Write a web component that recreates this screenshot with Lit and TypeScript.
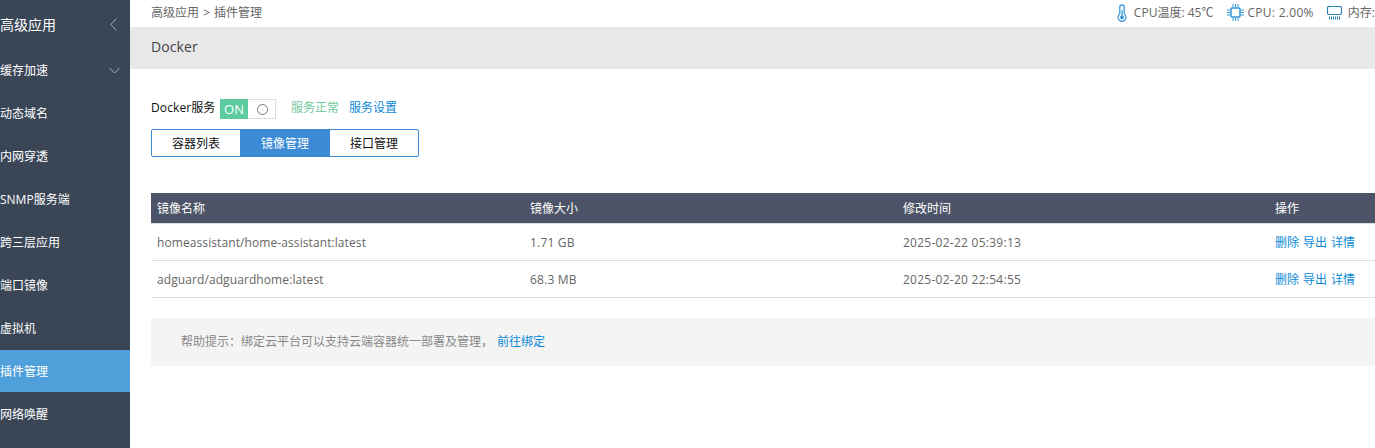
import { LitElement, html, css, svg } from "lit";
import { customElement } from "lit/decorators.js";

const menu = ["缓存加速", "动态域名", "内网穿透", "SNMP服务端", "跨三层应用", "端口镜像", "虚拟机", "插件管理", "网络唤醒"];
const rows = [
  ["homeassistant/home-assistant:latest", "1.71 GB", "2025-02-22 05:39:13"],
  ["adguard/adguardhome:latest", "68.3 MB", "2025-02-20 22:54:55"],
];

@customElement("app-root")
export class AppRoot extends LitElement {
  static styles = css`
    :host {
      display: flex;
      width: 1375px;
      height: 448px;
      overflow: hidden;
      background: #fff;
      font: 12px/18px "Open Sans", "Noto Sans CJK SC", sans-serif;
      color: #666;
    }
    a { color: #0a8ad6; text-decoration: none; }
    .side { width: 130px; flex: none; background: #3a4656; color: #fff; }
    .top-item {
      height: 49px;
      display: flex;
      align-items: center;
      justify-content: space-between;
      font-size: 14px;
      padding-right: 13px;
    }
    .item {
      height: 43px;
      display: flex;
      align-items: center;
      justify-content: space-between;
      padding-right: 10px;
      box-sizing: border-box;
    }
    .item.on { background: #4f9fdb; height: 42px; margin-bottom: 1px; padding-top: 1px; }
    .main { flex: 1; min-width: 0; display: flex; flex-direction: column; }
    .top {
      height: 27px;
      flex: none;
      display: flex;
      justify-content: space-between;
      align-items: center;
      padding: 0 0 2px 21px;
      box-sizing: border-box;
      white-space: nowrap;
    }
    .crumb-sep { margin: 0 1px; }
    .stats { display: flex; align-items: center; }
    .stat { display: flex; align-items: center; }
    .temp svg { margin-right: 6px; }
    .cpu { margin-left: 14px; }
    .cpu svg { margin-right: 3px; }
    .cpu span { letter-spacing: 0.3px; }
    .mem { margin-left: 13px; }
    .mem svg { margin-right: 6px; }
    .title {
      height: 42px;
      flex: none;
      background: #e8e8e8;
      display: flex;
      align-items: center;
      padding: 0 0 2px 21px;
      box-sizing: border-box;
      font-size: 14px;
      letter-spacing: 0.1px;
      color: #444;
    }
    .body { padding: 29px 0 0 21px; }
    .svc { display: flex; align-items: center; height: 22px; color: #111; }
    .svc > span, .svc > a { position: relative; top: -1px; }
    .svc-name { width: 69px; flex: none; white-space: nowrap; letter-spacing: 0.1px; }
    .toggle {
      display: flex;
      width: 56px;
      height: 20px;
      margin-right: 15px;
      box-sizing: border-box;
      border: 1px solid #ddd;
      background: #fff;
    }
    .toggle .lbl {
      width: 28px;
      margin: -1px 0 -1px -1px;
      background: #5ccb9f;
      color: #fff;
      font-size: 13px;
      line-height: 20px;
      text-align: center;
    }
    .toggle .knob { flex: 1; display: flex; align-items: center; justify-content: center; padding-left: 2px; }
    .toggle i {
      width: 9px; height: 9px; border: 1px solid #777; border-radius: 50%;
    }
    .ok { color: #6fc79c; margin-right: 10px; }
    .tabs {
      display: grid;
      grid-template-columns: 88px 90px 1fr;
      width: 268px;
      height: 28px;
      margin-top: 9px;
      box-sizing: border-box;
      border: 1px solid #3d8bd4;
      border-radius: 2px;
      color: #111;
    }
    .tab { display: flex; align-items: center; justify-content: center; padding-top: 2px; box-sizing: border-box; }
    .tab.on { background: #3d8bd4; color: #fff; }
    .table { margin-top: 36px; }
    .row {
      display: grid;
      grid-template-columns: 373px 373px 372px 1fr;
      height: 37px;
      box-sizing: border-box;
      align-items: center;
      padding: 2px 0 0 6px;
      border-bottom: 1px solid #ddd;
    }
    .row.head {
      height: 31px;
      background: #4d5468;
      color: #fff;
      background-clip: padding-box;
    }
    .name { letter-spacing: 0.09px; }
    .size { letter-spacing: 0.2px; }
    .time { letter-spacing: 0.26px; }
    .acts { display: flex; gap: 4px; }
    .tip {
      margin-top: 20px;
      height: 48px;
      background: #f4f4f4;
      display: flex;
      align-items: center;
      padding-left: 30px;
      box-sizing: border-box;
      color: #888;
    }
    .tip a { margin-left: 4px; }
    svg { display: block; flex: none; }
  `;

  private chevLeft = svg`<svg width="7" height="13" viewBox="0 0 7 13" fill="none" stroke="#a9b1bb" stroke-width="1"><path d="M6.500 .5 .8 6.500l5.700 6"/></svg>`;
  private chevDown = svg`<svg width="11" height="7" viewBox="0 0 11 7" fill="none" stroke="#a9b1bb" stroke-width="1"><path d="M.5 1l5 5 5-5"/></svg>`;

  render() {
    return html`
      <nav class="side">
        <div class="top-item"><span>高级应用</span>${this.chevLeft}</div>
        ${menu.map(
          (m, i) => html`<div class="item ${m === "插件管理" ? "on" : ""}">
            <span>${m}</span>${i === 0 ? this.chevDown : ""}
          </div>`
        )}
      </nav>
      <main class="main">
        <div class="top">
          <span>高级应用 <span class="crumb-sep">&gt;</span> 插件管理</span>
          <div class="stats">
            <div class="stat temp">
              <svg width="12" height="18" viewBox="0 0 12 18" fill="none" stroke="#2f94d8" stroke-width="1.200">
                <path d="M3.800 10V3a2.200 2.200 0 0 1 4.400 0v7a4 4 0 1 1-4.400 0Z"/>
                <circle cx="6" cy="13.300" r="1.300" fill="#2f94d8"/>
                <path d="M6 12V6"/>
              </svg>
              <span>CPU温度: 45℃</span>
            </div>
            <div class="stat cpu">
              <svg width="17" height="17" viewBox="0 0 17 17" fill="none" stroke="#2f94d8">
                <rect x="4" y="4" width="9" height="9" rx="1" stroke-width="1.500"/>
                <path d="M6 0v3M8.500 0v3M11 0v3M6 14v3M8.500 14v3M11 14v3M0 6h3M0 8.500h3M0 11h3M14 6h3M14 8.500h3M14 11h3"/>
              </svg>
              <span>CPU: 2.00%</span>
            </div>
            <div class="stat mem">
              <svg width="15" height="14" viewBox="0 0 15 14" fill="none" stroke="#2a7fb8">
                <rect x="0.500" y="0.500" width="14" height="8" rx="1.500" stroke-width="1.200"/>
                <path d="M2.500 10.500v3M4.500 10.500v3M6.500 10.500v3M8.500 10.500v3M10.500 10.500v3M12.500 10.500v3"/>
              </svg>
              <span>内存:</span>
            </div>
          </div>
        </div>
        <div class="title">Docker</div>
        <div class="body">
          <div class="svc">
            <span class="svc-name">Docker服务</span>
            <div class="toggle"><span class="lbl">ON</span><span class="knob"><i></i></span></div>
            <span class="ok">服务正常</span>
            <a href="#">服务设置</a>
          </div>
          <div class="tabs">
            <div class="tab">容器列表</div>
            <div class="tab on">镜像管理</div>
            <div class="tab">接口管理</div>
          </div>
          <div class="table">
            <div class="row head"><span>镜像名称</span><span>镜像大小</span><span>修改时间</span><span>操作</span></div>
            ${rows.map(
              (r) => html`<div class="row">
                <span class="name">${r[0]}</span><span class="size">${r[1]}</span><span class="time">${r[2]}</span>
                <span class="acts"><a href="#">删除</a><a href="#">导出</a><a href="#">详情</a></span>
              </div>`
            )}
          </div>
          <div class="tip">
            <span>帮助提示：绑定云平台可以支持云端容器统一部署及管理，</span><a href="#">前往绑定</a>
          </div>
        </div>
      </main>
    `;
  }
}
